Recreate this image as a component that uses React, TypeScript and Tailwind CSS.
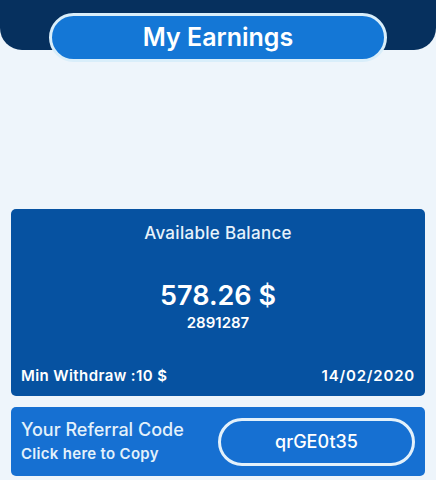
import React from 'react';

const App: React.FC = () => (
  <div className="w-[436px] h-[480px] bg-[#eef5fb] flex flex-col overflow-hidden" style={{ fontFamily: 'Inter, "Liberation Sans", sans-serif' }}>
    {/* header */}
    <div className="relative h-[64px] shrink-0">
      <div className="h-[50px] bg-[#06305e] rounded-b-[22px]" />
      <div className="absolute left-[49px] top-[13px] w-[338px] h-[49px] rounded-full bg-[#1477d6] border-[3px] border-[#d9eefa] flex items-center justify-center">
        <span className="text-white text-[25px] font-semibold tracking-[0px]">My Earnings</span>
      </div>
    </div>

    <div className="flex-1 flex flex-col justify-end px-[11px] pb-[4px] gap-[11px]">
      {/* balance card */}
      <div className="h-[187px] bg-[#0652a1] rounded-[5px] flex flex-col text-white px-[10px] pt-[12px] pb-[9px]">
        <div className="text-center text-[17px] font-medium tracking-[0.3px] text-[#e6f2fb]">Available Balance</div>
        <div className="flex-1 flex flex-col items-center justify-center pt-[2px]">
          <div className="text-[27px] font-semibold leading-[30px]">578.26 $</div>
          <div className="text-[15px] font-semibold leading-[20px] mt-[2px]">2891287</div>
        </div>
        <div className="flex justify-between text-[15px] font-semibold">
          <span className="tracking-[0.4px]">Min Withdraw :10 $</span>
          <span className="tracking-[0.8px]">14/02/2020</span>
        </div>
      </div>

      {/* referral card */}
      <div className="h-[69px] bg-[#1670d2] rounded-[5px] flex items-center justify-between pl-[10px] pr-[10px] text-white">
        <div className="flex flex-col">
          <span className="text-[18px] font-medium leading-[24px] text-[#e3f1fb]">Your Referral Code</span>
          <span className="text-[15px] font-semibold leading-[24px] tracking-[0.3px] text-[#e3f1fb]">Click here to Copy</span>
        </div>
        <div className="w-[197px] h-[48px] rounded-full border-[3px] border-[#e3f1fb] flex items-center justify-center">
          <span className="text-[18px] font-medium">qrGE0t35</span>
        </div>
      </div>
    </div>
  </div>
);

export default App;
